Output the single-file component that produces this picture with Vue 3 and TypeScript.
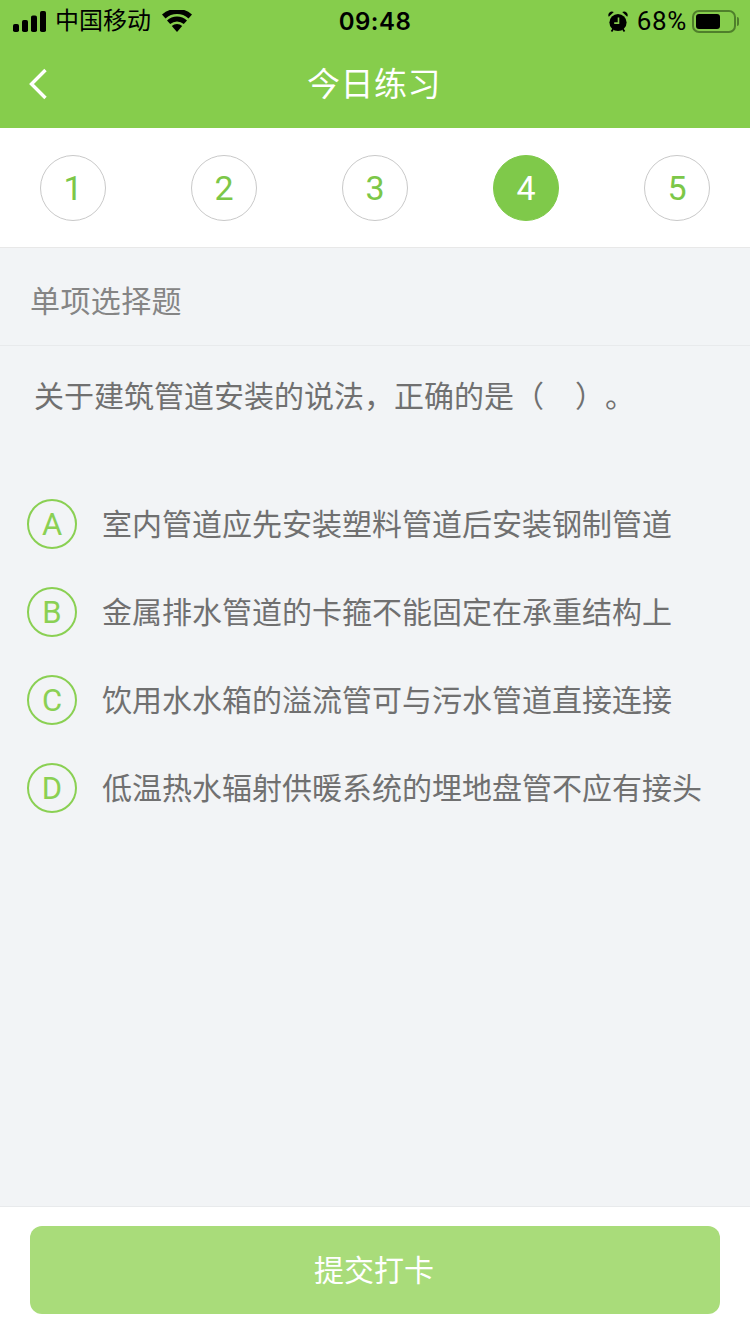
<template>
  <div class="page">
    <header class="top">
      <div class="status-bar">
        <div class="status-left">
          <svg class="signal" width="33" height="21" viewBox="0 0 33 21">
            <rect x="0" y="13" width="6" height="8" rx="1.8" />
            <rect x="9" y="9" width="6" height="12" rx="1.8" />
            <rect x="18" y="4.5" width="6" height="16.5" rx="1.8" />
            <rect x="27" y="0" width="6" height="21" rx="1.8" />
          </svg>
          <span class="carrier">中国移动</span>
          <svg class="wifi" width="30" height="22" viewBox="0 0 30 22">
            <path d="M15 22 9.8 16a7.6 7.6 0 0 1 10.4 0Z" />
            <path d="M8.2 14 5 10.4a15 15 0 0 1 20 0L21.8 14a10.4 10.4 0 0 0-13.6 0Z" />
            <path d="M3.5 8.4 0 4.6a22.4 22.4 0 0 1 30 0l-3.5 3.8a17.4 17.4 0 0 0-23 0Z" />
          </svg>
        </div>
        <span class="time">09:48</span>
        <div class="status-right">
          <svg class="alarm" width="20" height="21" viewBox="0 0 20 21">
            <circle cx="10" cy="11.5" r="8.6" />
            <path d="M.8 5.8a3.6 3.6 0 0 1 5-4.8ZM19.2 5.8a3.6 3.6 0 0 0-5-4.8Z" />
            <path d="M3.5 20.5 5.2 18M16.5 20.5 14.8 18" stroke="#000" stroke-width="1.8" />
            <path d="M10.5 6.5v5.6H6.2" fill="none" stroke="#86cd4c" stroke-width="1.6" />
          </svg>
          <span class="battery-text">68%</span>
          <div class="battery">
            <div class="battery-level" :style="{ width: battery + '%' }"></div>
          </div>
          <div class="battery-cap"></div>
        </div>
      </div>
      <div class="nav">
        <svg class="back" width="20" height="32" viewBox="0 0 20 32">
          <path d="M17.5 2 3.5 16l14 14" fill="none" stroke="#fff" stroke-width="3.4" />
        </svg>
        <h1 class="title">今日练习</h1>
      </div>
    </header>

    <div class="steps">
      <div
        v-for="n in steps"
        :key="n"
        class="step"
        :class="{ active: n === current }"
      >
        {{ n }}
      </div>
    </div>

    <main class="content">
      <div class="type">单项选择题</div>
      <p class="question">关于建筑管道安装的说法，正确的是（&nbsp;&nbsp;&nbsp;）。</p>
      <ul class="options">
        <li v-for="opt in options" :key="opt.key" class="option">
          <span class="letter">{{ opt.key }}</span>
          <span class="option-text">{{ opt.text }}</span>
        </li>
      </ul>
    </main>

    <footer class="footer">
      <button class="submit" type="button">提交打卡</button>
    </footer>
  </div>
</template>

<script setup lang="ts">
const battery = 68
const current = 4
const steps = [1, 2, 3, 4, 5]

const options = [
  { key: 'A', text: '室内管道应先安装塑料管道后安装钢制管道' },
  { key: 'B', text: '金属排水管道的卡箍不能固定在承重结构上' },
  { key: 'C', text: '饮用水水箱的溢流管可与污水管道直接连接' },
  { key: 'D', text: '低温热水辐射供暖系统的埋地盘管不应有接头' },
]
</script>

<style>
html,
body {
  margin: 0;
  background: #f2f4f6;
}
</style>

<style scoped>
.page {
  display: flex;
  flex-direction: column;
  width: 750px;
  height: 1334px;
  overflow: hidden;
  font-family: "Liberation Sans", "Noto Sans CJK SC", sans-serif;
  background: #f2f4f6;
}

.top {
  background: #86cd4c;
}

.status-bar {
  box-sizing: border-box;
  display: flex;
  align-items: center;
  justify-content: space-between;
  height: 40px;
  padding: 2px 11px 0 13px;
  color: #000;
  position: relative;
}

.status-left,
.status-right {
  display: flex;
  align-items: center;
}

.signal {
  margin-right: 9px;
}

.carrier {
  font-size: 24px;
  line-height: 38px;
}

.wifi {
  margin-left: 11px;
}

.time {
  position: absolute;
  left: 0;
  right: 0;
  text-align: center;
  font-family: Inter, "Liberation Sans", sans-serif;
  font-size: 24px;
  font-weight: 600;
  letter-spacing: 0.5px;
}

.alarm {
  margin-right: 9px;
}

.battery-text {
  font-family: Roboto, "Liberation Sans", sans-serif;
  font-size: 26px;
  font-weight: 400;
  letter-spacing: 0.7px;
  margin-right: 5px;
}

.battery {
  box-sizing: border-box;
  width: 44px;
  height: 23px;
  padding: 2px;
  border: 2px solid #4f7f2b;
  border-radius: 7px;
}

.battery-level {
  height: 100%;
  background: #000;
  border-radius: 3px;
}

.battery-cap {
  width: 2px;
  height: 9px;
  margin-left: 1px;
  background: #4f7f2b;
  border-radius: 0 2px 2px 0;
}

.nav {
  position: relative;
  display: flex;
  align-items: center;
  justify-content: center;
  height: 88px;
}

.back {
  position: absolute;
  left: 28px;
  top: 28px;
}

.title {
  margin: 0 0 0 -2px;
  font-size: 33px;
  font-weight: 400;
  color: #fff;
  letter-spacing: 0.5px;
  position: relative;
  top: -2px;
}

.steps {
  display: flex;
  justify-content: space-between;
  padding: 27px 40px 26px;
  background: #fff;
  border-bottom: 1px solid #e8e8e8;
}

.step {
  box-sizing: border-box;
  display: flex;
  align-items: center;
  justify-content: center;
  width: 66px;
  height: 66px;
  border: 1px solid #c9c9c9;
  border-radius: 50%;
  font-family: Roboto, "Liberation Sans", sans-serif;
  font-size: 34px;
  color: #7cc748;
}

.step.active {
  background: #7fc94a;
  border-color: #7fc94a;
  color: #fff;
}

.content {
  flex: 1;
}

.type {
  box-sizing: border-box;
  height: 98px;
  padding-left: 30px;
  line-height: 108px;
  font-size: 30px;
  letter-spacing: 0.4px;
  color: #858585;
  border-bottom: 1px solid #e8eaec;
}

.question {
  margin: 0;
  padding: 33px 34px 0;
  font-size: 30px;
  line-height: 36px;
  color: #707070;
  text-spacing-trim: space-all;
  word-spacing: 2px;
}

.options {
  margin: 0;
  padding: 84px 0 0 27px;
  list-style: none;
}

.option {
  display: flex;
  align-items: center;
  height: 50px;
  margin-bottom: 38px;
}

.letter {
  box-sizing: border-box;
  display: flex;
  align-items: center;
  justify-content: center;
  width: 50px;
  height: 50px;
  border: 2px solid #8ad053;
  border-radius: 50%;
  font-family: Roboto, "Liberation Sans", sans-serif;
  font-size: 31px;
  color: #8ad053;
}

.option-text {
  margin-left: 25px;
  padding-bottom: 4px;
  font-size: 30px;
  white-space: nowrap;
  color: #707070;
}

.footer {
  box-sizing: border-box;
  height: 128px;
  padding: 19px 30px 0;
  background: #fff;
  border-top: 1px solid #e8eaec;
}

.submit {
  display: block;
  width: 100%;
  height: 88px;
  padding: 0 2px 4px 0;
  border: 0;
  border-radius: 12px;
  background: #a9dc7a;
  color: #fff;
  font-family: inherit;
  font-size: 30px;
}
</style>
